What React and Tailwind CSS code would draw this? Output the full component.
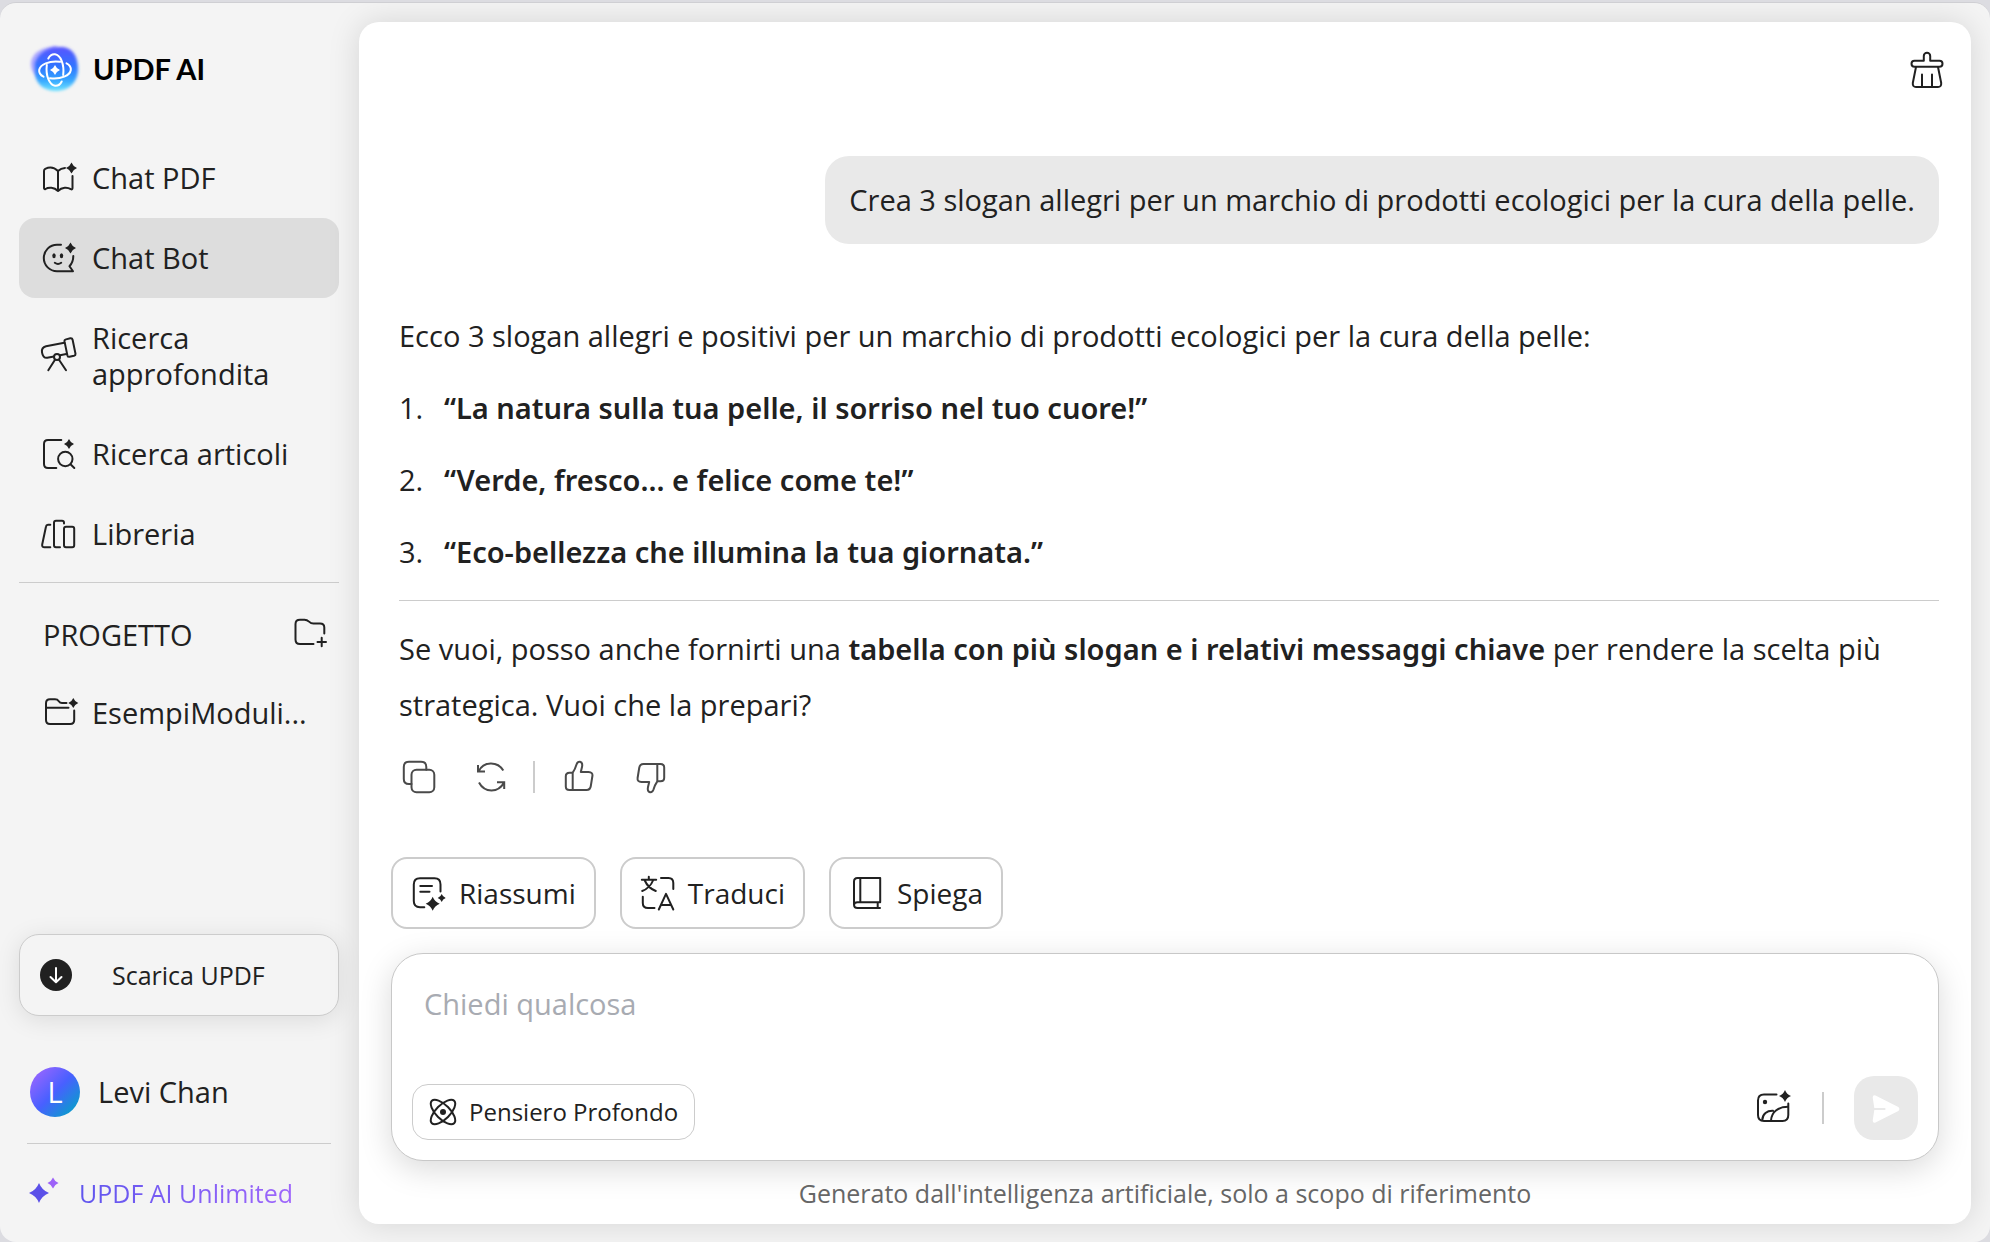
import React, { useState } from 'react';
import clsx from 'clsx';

const navItems = [
  { id: 'pdf', label: 'Chat PDF', icon: BookIcon },
  { id: 'bot', label: 'Chat Bot', icon: BotIcon },
  { id: 'deep', label: 'Ricerca approfondita', icon: TelescopeIcon },
  { id: 'papers', label: 'Ricerca articoli', icon: PaperSearchIcon },
  { id: 'library', label: 'Libreria', icon: LibraryIcon },
];

const slogans = [
  '“La natura sulla tua pelle, il sorriso nel tuo cuore!”',
  '“Verde, fresco… e felice come te!”',
  '“Eco-bellezza che illumina la tua giornata.”',
];

const quickActions = [
  { label: 'Riassumi', icon: SummaryIcon },
  { label: 'Traduci', icon: TranslateIcon },
  { label: 'Spiega', icon: ExplainIcon },
];

const strongClass = "font-['Noto_Sans',sans-serif] font-semibold";

export default function App() {
  const [active, setActive] = useState('bot');
  const [prompt, setPrompt] = useState('');

  return (
    <div className="min-h-screen flex flex-col bg-[#dcdce1] pt-[2px] font-['Open_Sans','Noto_Sans',sans-serif] text-[29px] leading-9 text-[#212121]">
      <div className="flex-1 flex rounded-2xl border-t border-[#cfcfd3] bg-[#f4f4f4] overflow-hidden">
        <Sidebar active={active} onSelect={setActive} />

        <main className="flex-1 min-w-0 flex flex-col mt-[19px] mb-[18px] mr-[19px] pl-8 pr-8 rounded-[20px] bg-white shadow-[0_0_32px_rgba(0,0,0,0.13)]">
          <header className="flex justify-end pt-[30px] -mr-1.5">
            <button aria-label="Cancella chat"><BroomIcon /></button>
          </header>

          <section className="pl-2">
            <div className="flex justify-end mt-[68px]">
              <p className="rounded-3xl bg-[#e9e9e9] px-6 py-[26px]">
                Crea 3 slogan allegri per un marchio di prodotti ecologici per la cura della pelle.
              </p>
            </div>

            <div className="mt-16 leading-[56px]">
              <p>Ecco 3 slogan allegri e positivi per un marchio di prodotti ecologici per la cura della pelle:</p>
              <ol className="mt-4 space-y-4">
                {slogans.map((text, i) => (
                  <li key={text} className="flex">
                    <span className="w-[45px] shrink-0">{i + 1}.</span>
                    <strong className={strongClass}>{text}</strong>
                  </li>
                ))}
              </ol>
              <hr className="my-5 border-[#cccccc]" />
              <p>
                Se vuoi, posso anche fornirti una{' '}
                <strong className={strongClass}>tabella con più slogan e i relativi messaggi chiave</strong>{' '}
                per rendere la scelta più strategica. Vuoi che la prepari?
              </p>
            </div>

            <div className="flex items-center gap-9 mt-[26px] pl-[2px] text-[#4a4a4a]">
              <button aria-label="Copia"><CopyIcon /></button>
              <button aria-label="Rigenera"><RefreshIcon /></button>
              <span className="w-[2px] h-8 -ml-3 -mr-2.5 bg-[#cccccc]" />
              <button aria-label="Mi piace"><ThumbIcon /></button>
              <button aria-label="Non mi piace"><ThumbIcon className="rotate-180" /></button>
            </div>
          </section>

          <div className="flex gap-6 mt-auto pt-8 text-[28px]">
            {quickActions.map(({ label, icon: ActionIcon }) => (
              <button key={label} className="h-[72px] flex items-center gap-3 px-[18px] rounded-2xl border-2 border-[#cccccc] bg-white">
                <ActionIcon />
                {label}
              </button>
            ))}
          </div>

          <div className="mt-6 rounded-[32px] border border-[#c8c8c8] bg-white shadow-[0_8px_32px_rgba(0,0,0,0.15)]">
            <textarea
              aria-label="Messaggio"
              value={prompt}
              onChange={(e) => setPrompt(e.target.value)}
              placeholder="Chiedi qualcosa"
              className="block w-full h-[122px] resize-none bg-transparent px-8 pt-8 outline-none placeholder-[#a8abb2]"
            />
            <div className="flex items-end justify-between px-5 pb-5">
              <button className="h-14 flex items-center gap-3 px-4 rounded-2xl border border-[#cccccc] text-2xl leading-9">
                <AtomIcon />
                Pensiero Profondo
              </button>
              <div className="flex items-center gap-[30px]">
                <button aria-label="Aggiungi immagine"><ImageIcon /></button>
                <span className="w-[2px] h-8 bg-[#cccccc]" />
                <button aria-label="Invia" className="size-16 rounded-[20px] bg-[#e9e9e9]"><SendIcon /></button>
              </div>
            </div>
          </div>

          <p className="mt-[14px] pb-[13px] text-center text-[25px] text-[#666666]">
            Generato dall'intelligenza artificiale, solo a scopo di riferimento
          </p>
        </main>
      </div>
    </div>
  );
}

function Sidebar({ active, onSelect }) {
  return (
    <aside className="w-[359px] shrink-0 flex flex-col pl-[19px] pr-5">
      <div className="flex items-center gap-[14px] mt-[42px] pl-3">
        <LogoIcon />
        <span className="font-['Lato',sans-serif] font-bold text-black">UPDF AI</span>
      </div>

      <nav className="mt-[45px] flex flex-col">
        {navItems.map(({ id, label, icon: NavIcon }) => (
          <button
            key={id}
            onClick={() => onSelect(id)}
            className={clsx('flex items-center gap-4 px-[21px] py-[22px] rounded-2xl text-left', active === id && 'bg-[#dddddd]')}
          >
            <NavIcon />
            <span className="flex-1">{label}</span>
          </button>
        ))}
      </nav>

      <hr className="mt-2 border-[#cccccc]" />

      <div className="flex items-center justify-between mt-[34px] pl-6 pr-3">
        <h2>PROGETTO</h2>
        <button aria-label="Nuovo progetto"><FolderPlusIcon /></button>
      </div>
      <button className="flex items-center gap-4 mt-[42px] px-[21px] text-left">
        <FolderStarIcon />
        <span>EsempiModuli...</span>
      </button>

      <div className="mt-auto pt-8">
        <button className="w-full h-[82px] flex items-center gap-10 px-5 rounded-[20px] border border-[#cccccc] bg-[#f4f4f4] text-[25px] shadow-[0_4px_24px_rgba(0,0,0,0.1)]">
          <DownloadIcon />
          Scarica UPDF
        </button>
        <button className="flex items-center gap-[18px] mt-[51px] pl-[11px]">
          <span className="size-[50px] rounded-full bg-[linear-gradient(135deg,#a066ff_5%,#4860ff_50%,#00a6c4_95%)] leading-[50px] text-white">L</span>
          Levi Chan
        </button>
        <hr className="mt-[26px] mx-2 border-[#cccccc]" />
        <a href="#upgrade" className="flex items-center gap-[22px] mt-[31px] mb-[31px] pl-[10px] text-[25px]">
          <UpgradeIcon />
          <span className="bg-linear-to-r from-[#5f55ee] to-[#9f66fb] bg-clip-text text-transparent">UPDF AI Unlimited</span>
        </a>
      </div>
    </aside>
  );
}

function Icon({ size = 36, className, children }) {
  return (
    <svg
      width={size}
      height={size}
      viewBox={`0 0 ${size} ${size}`}
      fill="none"
      stroke="currentColor"
      strokeWidth="2"
      strokeLinecap="round"
      strokeLinejoin="round"
      className={clsx('block shrink-0 overflow-visible', className)}
      aria-hidden="true"
    >
      {children}
    </svg>
  );
}

// four-pointed sparkle centred on x, y
function Star({ x, y, r, fill = 'currentColor' }) {
  const k = r * 0.28;
  return (
    <path
      fill={fill}
      stroke="none"
      d={`M${x} ${y - r}Q${x + k} ${y - k} ${x + r} ${y}Q${x + k} ${y + k} ${x} ${y + r}Q${x - k} ${y + k} ${x - r} ${y}Q${x - k} ${y - k} ${x} ${y - r}Z`}
    />
  );
}

function LogoIcon() {
  const orbit = 'M17.3 13.5C19 10 22 9 24 9.2C29.5 10 33.5 19 32.2 30';
  return (
    <Icon size={48}>
      <defs>
        <linearGradient id="logoFill" x1="0" y1="0" x2="0" y2="1">
          <stop offset="0" stopColor="#5a55ff" />
          <stop offset="0.45" stopColor="#2f74ff" />
          <stop offset="0.75" stopColor="#35a5ff" />
          <stop offset="1" stopColor="#6fe4ff" />
        </linearGradient>
        <filter id="logoBlur" x="-20%" y="-20%" width="140%" height="140%">
          <feGaussianBlur stdDeviation="1.5" />
        </filter>
      </defs>
      <path filter="url(#logoBlur)" fill="#a9a5ff" stroke="none" d="M0 17C2 6 14 2 26 1L14 36C5 33 -1 26 0 17Z" />
      <path filter="url(#logoBlur)" fill="url(#logoFill)" stroke="none" d="M4 18C8 6 20 1 31 2C43 3 47 13 47 24C47 37 38 46 25 46C12 46 4 38 4 27Z" />
      <g stroke="#fff">
        <path d={orbit} />
        <path d={orbit} transform="rotate(90 24 25)" />
        <path d={orbit} transform="rotate(180 24 25)" />
        <path d={orbit} transform="rotate(270 24 25)" />
      </g>
      <Star x={24} y={25} r={5} fill="#fff" />
    </Icon>
  );
}

function BookIcon() {
  return (
    <Icon>
      <path d="M18 31C14 27 8.5 27 5.5 29Q4 29.5 4 28V11Q4 9.5 5.2 8.8C9 7 14 7 18 11V31C22 27 27.5 27 30.8 29.2Q32.5 30 32.5 28V16M18 11C20 9 22.5 8 25 7.9" />
      <Star x={31.5} y={8} r={5.5} />
    </Icon>
  );
}

function BotIcon() {
  return (
    <Icon>
      <path d="M21 4.8H17A13.2 13.2 0 0 0 17 31.2H33L29.5 26.2C32 23.5 33.3 20 33.3 16" />
      <path d="M14.8 22.8Q18 25 21.2 22.8" />
      <ellipse cx="14" cy="15.8" rx="1.7" ry="2.5" fill="currentColor" stroke="none" />
      <ellipse cx="21.5" cy="15.8" rx="1.7" ry="2.5" fill="currentColor" stroke="none" />
      <Star x={30.5} y={8} r={5.5} />
    </Icon>
  );
}

function TelescopeIcon() {
  return (
    <Icon>
      <path d="M24.3 4.8L6 8.3Q1.3 9.5 2 14.3Q3 20.3 7.2 19.8L14 18.5M20 17.3L26.3 16" />
      <path d="M24.5 3.4Q24.3 1.8 26 1.4L30.3 .3Q32.2 0 32.6 1.8L35.5 15.8Q35.7 17.3 34 17.8L29.5 18.8Q27.8 19 27.4 17.4Z" />
      <circle cx="17" cy="19" r="3" />
      <path d="M15 21.8L8.3 32.2M19 21.8L26 32.2" />
    </Icon>
  );
}

function PaperSearchIcon() {
  return (
    <Icon>
      <path d="M21.3 4H8Q4 4 4 8V28Q4 32 8 32H16.3" />
      <circle cx="25.3" cy="23" r="7.2" />
      <path d="M30.5 28.3L34.3 32" />
      <Star x={29} y={8} r={5} />
    </Icon>
  );
}

function LibraryIcon() {
  return (
    <Icon>
      <path d="M10.3 8.8H8Q6.3 8.8 6 10.5L2.2 28.5Q1.8 31.3 4.5 31.3H10.3" />
      <path d="M24 7.5V6.8Q24 4.8 22 4.8H16Q14 4.8 14 6.8V29.3Q14 31.3 16 31.3H20" />
      <rect x="24" y="10.8" width="10.2" height="20.5" rx="2" />
    </Icon>
  );
}

function FolderPlusIcon() {
  return (
    <Icon>
      <path d="M22.5 27H9Q4.5 27 4.5 22.5V7Q4.5 2.7 9 2.7H13.5Q16 2.7 18 4.6Q20 6.5 22.5 6.5H29Q33.3 6.5 33.3 10.5V16.5M30.7 20.8V29.2M26.5 25H35" />
    </Icon>
  );
}

function FolderStarIcon() {
  return (
    <Icon>
      <path d="M26.5 8H22Q20 8 18.8 6.2Q17.5 4.3 15 4.3H10Q6 4.3 6 8.3V25Q6 29 10 29H30.2Q34.2 29 34.2 25V15.5M6 12.7H28.5" />
      <Star x={33.3} y={8} r={5} />
    </Icon>
  );
}

function DownloadIcon() {
  return (
    <Icon size={32}>
      <circle cx="16" cy="16" r="16" fill="currentColor" stroke="none" />
      <path stroke="#fff" d="M16 9V23M10.5 18L16 23.3L21.5 18" />
    </Icon>
  );
}

function UpgradeIcon() {
  return (
    <Icon size={28}>
      <Star x={10} y={14} r={10} fill="#5b50e8" />
      <Star x={24} y={4} r={5.5} fill="#9d62f8" />
    </Icon>
  );
}

function BroomIcon() {
  return (
    <Icon>
      <path d="M14.8 8.8V4A3.2 3.2 0 0 1 21.2 4V8.8H30.5A3 3 0 0 1 30.5 14.8H5.5A3 3 0 0 1 5.5 8.8Z" />
      <path d="M7 15L3.8 31Q3.5 35 7 35H29Q32.5 35 32.2 31L29 15M13 22.5V34M23 22.5V34" />
    </Icon>
  );
}

function CopyIcon() {
  return (
    <Icon>
      <rect x="10.5" y="10.7" width="22.8" height="22.6" rx="5" />
      <path d="M10.5 25H8Q2.8 25 2.8 20V8Q2.8 2.8 8 2.8H20Q25.3 2.8 25.3 8V10.7" />
    </Icon>
  );
}

function RefreshIcon() {
  return (
    <Icon>
      <g strokeLinecap="butt" strokeLinejoin="miter">
        <path d="M5.5 12.5C10.5 2 24.5 2 30.3 11.5M5 6V12.6H12" />
        <path d="M6 23.5C11.5 34 25.5 34 31 23.5M24 23.2H31.2V30" />
      </g>
    </Icon>
  );
}

function ThumbIcon({ className }) {
  return (
    <Icon className={className}>
      <path d="M11.7 13.7Q14 10.5 15.5 5.5Q16.5 2.5 19 2.8Q22 3.5 21 8L19.8 13H27.5Q32 13.3 31.4 17L29.8 27Q29.2 31 25.5 31H8.5Q4.8 31 4.8 27.5V17.2Q4.8 13.7 8.5 13.7ZM11.7 13.7V31" />
    </Icon>
  );
}

function SummaryIcon() {
  return (
    <Icon>
      <path d="M13.3 32.2H9Q2.8 32.2 2.8 26V9.5Q2.8 3.3 9 3.3H23.5Q29.5 3.3 29.5 9.5V16.5M9.3 11H21M9.3 16.8H18.5" />
      <Star x={21.7} y={28.7} r={7} />
      <Star x={30.7} y={23} r={4} />
    </Icon>
  );
}

function TranslateIcon() {
  return (
    <Icon>
      <path d="M8.8 1.8V4.5M1.8 4.8H16.2M4.8 5.5Q8 13 15.8 16M13 5.5Q10 13 2.2 16" />
      <path d="M21 3H28.5Q33.3 3 33.3 8V14M2.8 21.8V28Q2.8 33 8 33H14.5" />
      <path d="M18.8 34.5L26 18.8L33.3 34.5M21 30H31.2" />
    </Icon>
  );
}

function ExplainIcon() {
  return (
    <Icon>
      <path d="M31 33H8.5Q5 33 5 29.5V6.5Q5 3 8.5 3H31.2V27.3H8.5Q5 27.3 5 30M11.3 3V27.3M28.7 27.3V33" />
    </Icon>
  );
}

function AtomIcon() {
  return (
    <Icon size={28}>
      <ellipse cx="14" cy="14" rx="15.8" ry="7" transform="rotate(45 14 14)" />
      <ellipse cx="14" cy="14" rx="15.8" ry="7" transform="rotate(-45 14 14)" />
      <circle cx="14" cy="14" r="3" fill="currentColor" stroke="none" />
    </Icon>
  );
}

function ImageIcon() {
  return (
    <Icon>
      <path d="M20.5 4.5H8Q2 4.5 2 10.5V25Q2 31 8 31H26.5Q32.3 31 32.3 25V13.5" />
      <path d="M6.3 30C6.5 24 11 20.5 17 20.8M15 30.5C15.5 22 22 16.8 32 16.8" />
      <circle cx="9" cy="12" r="2.2" fill="currentColor" stroke="none" />
      <Star x={29} y={6} r={6} />
    </Icon>
  );
}

function SendIcon() {
  return (
    <Icon size={64}>
      <path fill="#fff" stroke="none" d="M18.7 21.5Q18.7 18.5 21.5 19.4L44.3 31Q46.5 33 44.3 35L21.5 46.5Q18.7 47.3 18.7 44.5L20.3 34H31Q32.5 33 31 32H20.3Z" />
    </Icon>
  );
}
